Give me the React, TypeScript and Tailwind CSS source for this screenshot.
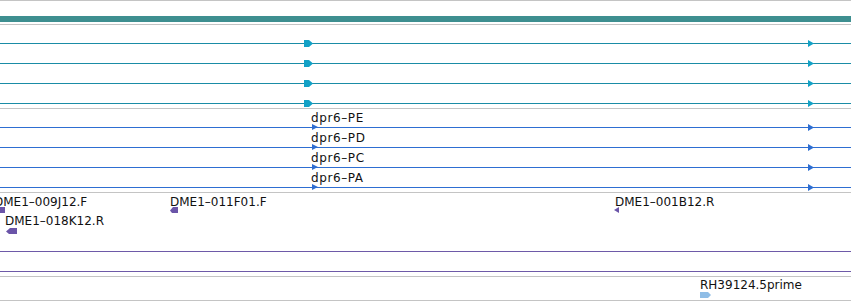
type Shape = { left: number; top: number; w: number; h: number; points: string; color: string };

function Glyph({ left, top, w, h, points, color }: Shape) {
  return (
    <svg
      className="absolute"
      style={{ left, top }}
      width={w}
      height={h}
      viewBox={`0 0 ${w} ${h}`}
    >
      <polygon points={points} fill={color} />
    </svg>
  );
}

function Label({ left, top, text, wide }: { left: number; top: number; text: string; wide?: boolean }) {
  return (
    <span className={wide ? 'absolute whitespace-nowrap tracking-[0.6px]' : 'absolute whitespace-nowrap'} style={{ left, top }}>
      {text}
    </span>
  );
}

const tealRows = [19, 20, 20, 20];
const transcripts = ['dpr6–PE', 'dpr6–PD', 'dpr6–PC', 'dpr6–PA'];

export default function App() {
  return (
    <div className="h-[301px] w-[851px] overflow-hidden bg-white font-['DejaVu_Sans',sans-serif] text-[12px] leading-[14px] text-[#111]">
      <div className="h-px bg-[#c4c4c4]" />
      <div className="pt-[15px] pb-[2px]">
        <div className="h-[6px] bg-[#3e8f90]" />
      </div>

      {/* gene models, teal */}
      <div className="border-t border-[#c4c4c4] pb-[4px]">
        {tealRows.map((h, i) => (
          <div key={i} className="relative border-b border-[#1a8ca6]" style={{ height: h }}>
            <Glyph left={304} top={h - 4} w={9} h={7} points="0,0 5,0 9,3.5 5,7 0,7" color="#12a1c6" />
            <Glyph left={808} top={h - 4} w={6} h={7} points="0,0 6,3.5 0,7" color="#12a1c6" />
          </div>
        ))}
      </div>

      {/* transcripts, blue */}
      <div className="border-t border-[#c4c4c4] pb-[4px]">
        {transcripts.map((name, i) => {
          const h = i === 0 ? 19 : 20;
          return (
            <div key={name} className="relative border-b border-[#2e6ed2]" style={{ height: h }}>
              <Label left={311} top={h - 17} text={name} wide />
              <Glyph left={312} top={h - 4} w={6} h={6} points="0,0 6,3 0,6" color="#2e6ed2" />
              <Glyph left={808} top={h - 4} w={6} h={7} points="0,0 6,3.5 0,7" color="#2e6ed2" />
            </div>
          );
        })}
      </div>

      {/* cDNA / BAC ends, purple */}
      <div className="border-t border-[#c4c4c4] pb-[4px]">
        <div className="relative h-[39px]">
          <Label left={-6} top={2} text="DME1–009J12.F" />
          <Glyph left={0} top={14} w={5} h={6} points="0,0 5,0 5,6 0,6" color="#6a54a8" />
          <Label left={170} top={2} text="DME1–011F01.F" />
          <Glyph left={170} top={14} w={8} h={6} points="0,3.5 3,0 8,0 8,6 2,6" color="#6a54a8" />
          <Label left={5} top={21} text="DME1–018K12.R" />
          <Glyph left={6} top={35} w={11} h={6} points="0,3.5 4,0 11,0 11,6 3,6" color="#6a54a8" />
          <Label left={615} top={2} text="DME1–001B12.R" />
          <Glyph left={614} top={14} w={5} h={6} points="0,3 5,0 5,6" color="#6a54a8" />
        </div>
        <div className="h-[20px] border-b border-[#6e5aa8]" />
        <div className="h-[20px] border-b border-[#6e5aa8]" />
      </div>

      {/* ESTs, light blue */}
      <div className="relative h-[25px] border-y border-[#c4c4c4]">
        <Label left={700} top={1} text="RH39124.5prime" />
        <Glyph left={700} top={15} w={11} h={6} points="0,0 8,0 11,3 8,6 0,6" color="#8fbde6" />
      </div>
    </div>
  );
}
